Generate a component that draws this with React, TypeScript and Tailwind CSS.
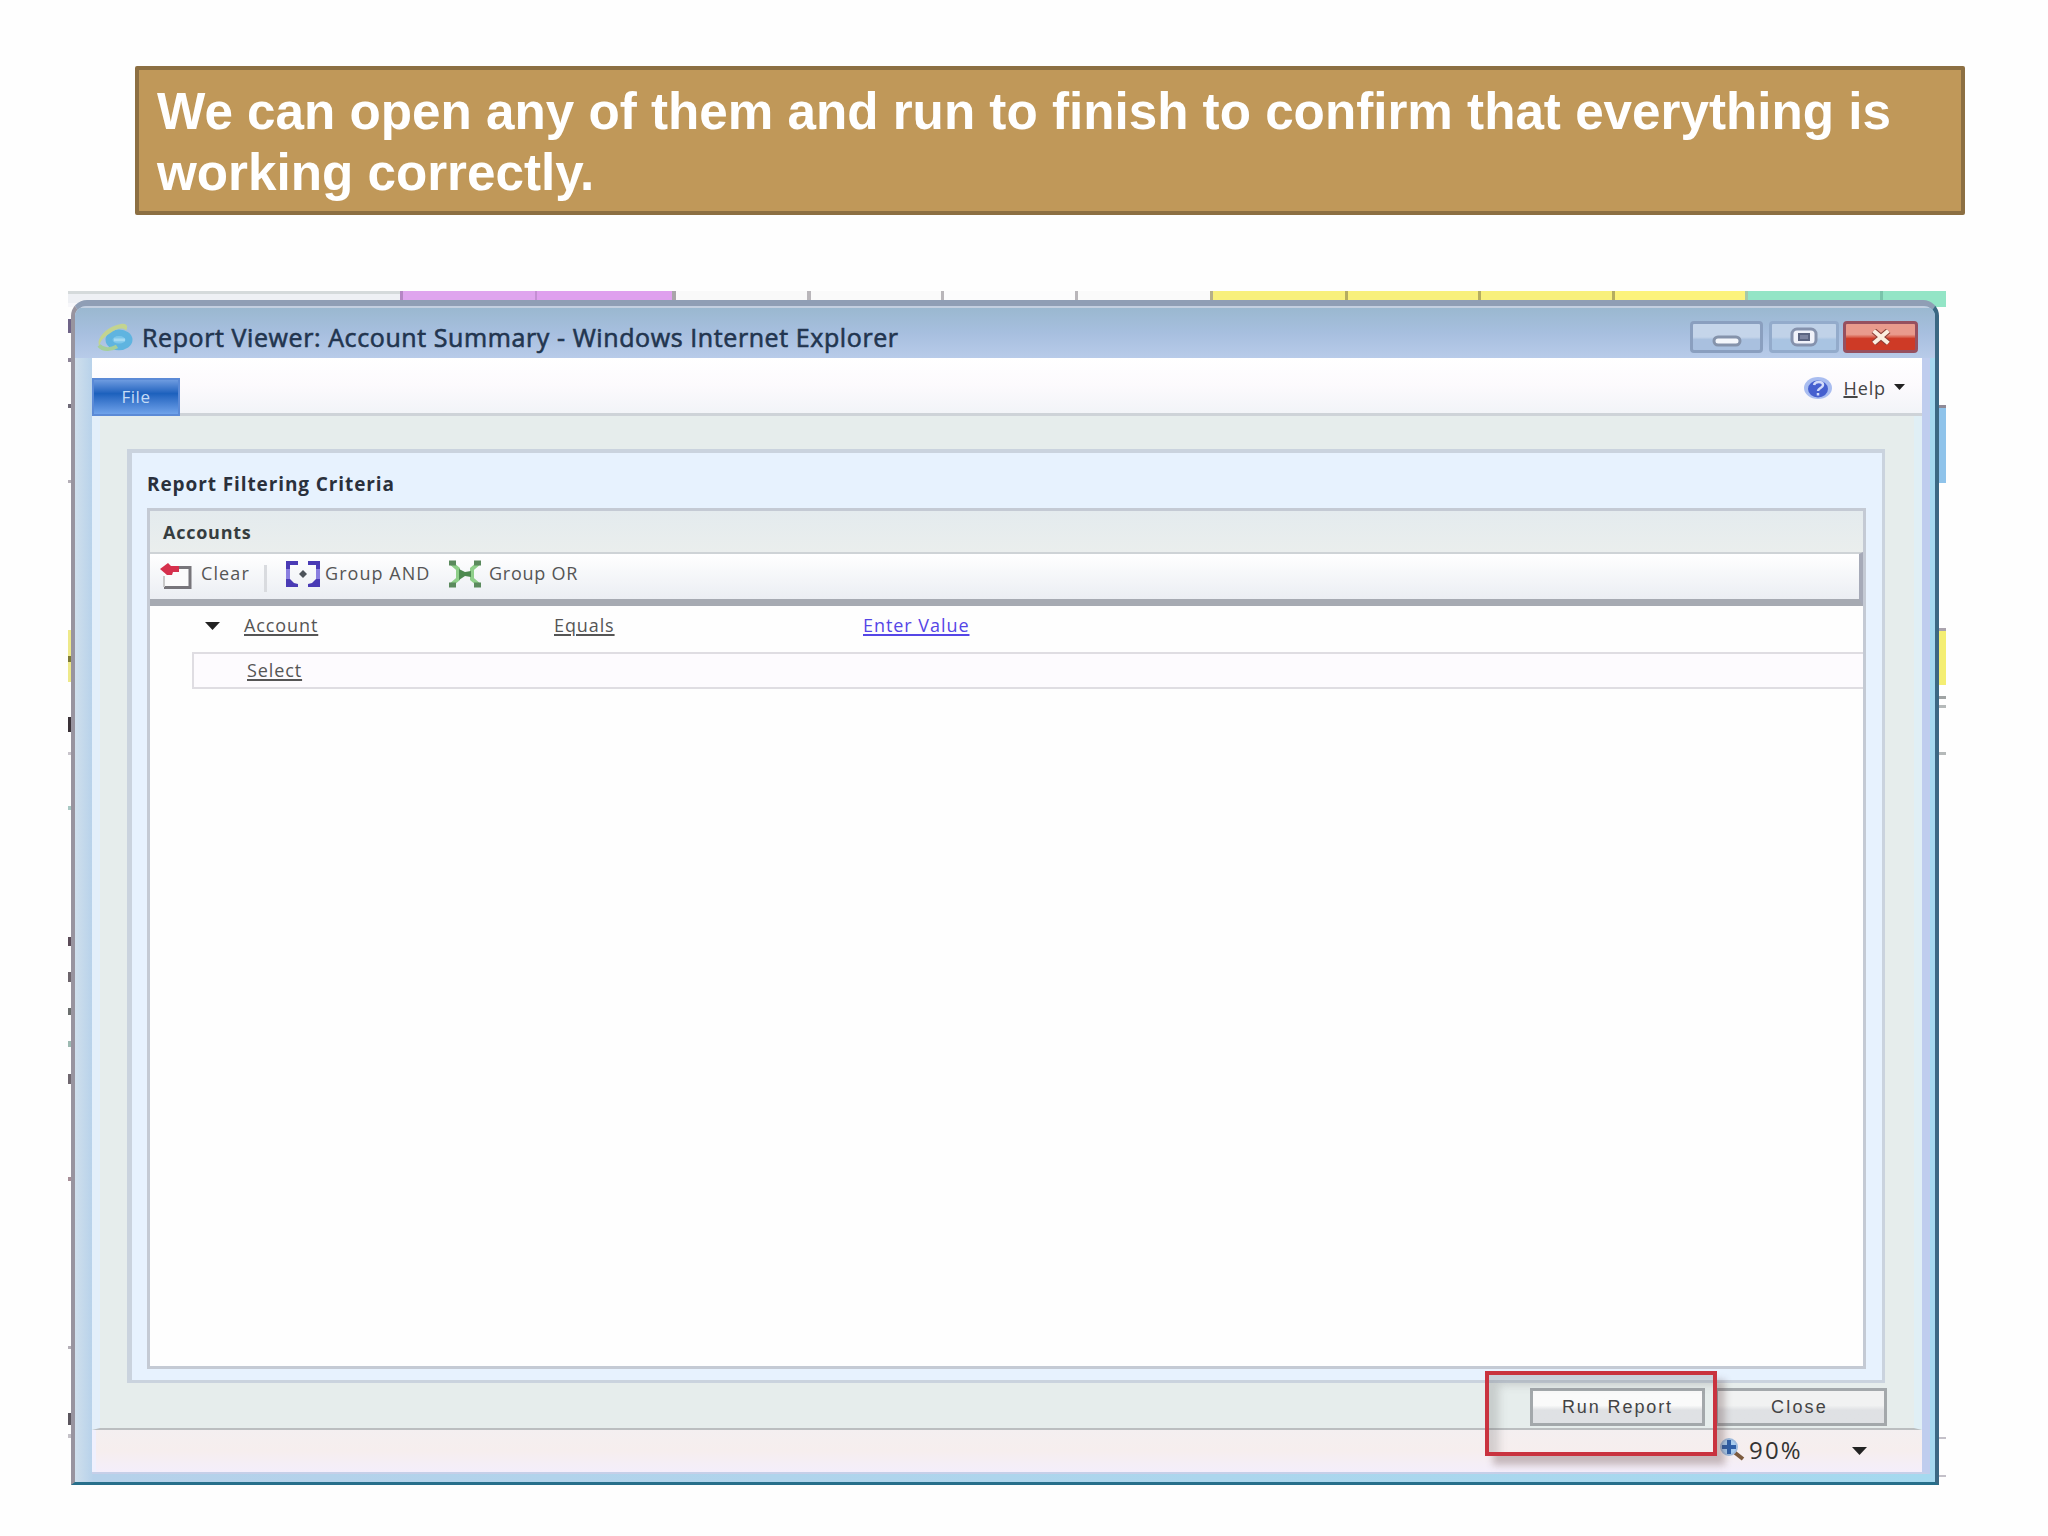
import React from 'react';

interface Mark {
  top: number;
  height: number;
  color: string;
}

// Pieces of the spreadsheet that stick out behind the window
const topCells = [
  'w-[332px] bg-[#eef0f4] border-t-3 border-t-[#d5dadb] border-b-4 border-b-[#f7f7fa]',
  'w-[135px] bg-[#dfa5ee] border-l-3 border-[#b586c4]',
  'w-[137px] bg-[#dfa0ee] border-l-2 border-[#c48fd3]',
  'w-[135px] bg-[#f9f9f9] border-l-4 border-[#a9a5a9]',
  'w-[134px] bg-[#fafafa] border-l-4 border-[#b9b6ba]',
  'w-[134px] bg-[#fcfcfd] border-l-3 border-[#b9b6ba]',
  'w-[135px] bg-[#fafafa] border-l-3 border-[#b9b6ba]',
  'w-[135px] bg-[#f8f07c] border-l-3 border-[#b5b08a]',
  'w-[133px] bg-[#f8f07c] border-l-3 border-[#b5ad60]',
  'w-[134px] bg-[#f8f07c] border-l-3 border-[#b5ad60]',
  'w-[133px] bg-[#fcf37c] border-l-3 border-[#b5ad60]',
  'w-[135px] bg-[#93e5c6] border-l-3 border-[#a5c9a8]',
  'w-[66px] bg-[#93e5c6] border-l-3 border-[#79c4ab]',
];

const leftMarks: Mark[] = [
  { top: 28, height: 14, color: '#6f6488' },
  { top: 67, height: 4, color: '#8d8598' },
  { top: 113, height: 4, color: '#6f6a78' },
  { top: 189, height: 3, color: '#b5b0b8' },
  { top: 339, height: 52, color: '#eee98a' },
  { top: 365, height: 6, color: '#7d7a35' },
  { top: 426, height: 15, color: '#3a3238' },
  { top: 461, height: 3, color: '#c9c5cc' },
  { top: 515, height: 4, color: '#a9c9c4' },
  { top: 646, height: 9, color: '#5b4c58' },
  { top: 681, height: 10, color: '#6d656c' },
  { top: 717, height: 7, color: '#6b6f6e' },
  { top: 750, height: 6, color: '#9dbab2' },
  { top: 783, height: 10, color: '#6f676f' },
  { top: 886, height: 4, color: '#a78f98' },
  { top: 1055, height: 3, color: '#b5b0b8' },
  { top: 1122, height: 12, color: '#5b565e' },
  { top: 1143, height: 4, color: '#c5c2c8' },
];

const rightMarks: Mark[] = [
  { top: 114, height: 3, color: '#8f8a96' },
  { top: 117, height: 75, color: '#8fc3ea' },
  { top: 337, height: 3, color: '#aaa3ad' },
  { top: 340, height: 54, color: '#f4ee73' },
  { top: 405, height: 3, color: '#9fa3a3' },
  { top: 414, height: 3, color: '#b5b9b9' },
  { top: 461, height: 3, color: '#b5b9b9' },
  { top: 1146, height: 2, color: '#c3c0c8' },
  { top: 1184, height: 2, color: '#c3c0c8' },
];

const IeIcon = () => (
  <svg className="w-[42px] h-[32px]" viewBox="0 0 42 34" preserveAspectRatio="none">
    <ellipse cx="24" cy="20" rx="10" ry="7.500" fill="#7cc6ea" stroke="#5fb4e0" strokeWidth="7" />
    <path d="M19 20h11" stroke="#a5daf2" strokeWidth="3" />
    <path d="M5 28C-1 19 13 5 27 3c6 0 6 4 4 7-3-4-10-2-16 3C8 18 4 22 5 28z" fill="#c3d490" />
    <path d="M4 26c4 5 12 5 18 1" stroke="#a5cf9b" strokeWidth="4" fill="none" />
  </svg>
);

const ClearIcon = () => (
  <svg className="w-[34px] h-[28px]" viewBox="0 0 34 28">
    <rect x="4" y="5" width="26" height="20" fill="#fbfbfb" />
    <path d="M18 5.500H30V25.500H4" fill="none" stroke="#77757a" strokeWidth="3" />
    <path d="M4 14V25" stroke="#c9c9c9" strokeWidth="2" />
    <path d="M0 7l8-6 3 3h8v6h-6l-1 3H7z" fill="#d5304c" />
  </svg>
);

const GroupAndIcon = () => (
  <svg className="w-[36px] h-[28px]" viewBox="0 0 36 28">
    <path d="M3 3V25M33 3V25" stroke="#8a7fe0" strokeWidth="4" />
    <path d="M1 1h12v4H5v4H1zM35 1H23v4h8v4h4zM1 27h12v-3l-4-1-4-4H1zM35 27H23v-3l4-1 4-4h4z" fill="#4a3bb5" />
    <path d="M18 10l4 4-4 4-4-4z" fill="#4d535a" />
  </svg>
);

const GroupOrIcon = () => (
  <svg className="w-[34px] h-[28px]" viewBox="0 0 34 28">
    <path d="M3 3l7 6v10l-7 6M31 3l-7 6v10l7 6" fill="none" stroke="#8fcf8a" strokeWidth="4" />
    <path d="M1 3h7M1 25h7M26 3h7M26 25h7" stroke="#5b8a5d" strokeWidth="5" />
    <path d="M11 9l6 3 6-1v6l-6-1-6 4z" fill="#4d8a50" />
  </svg>
);

const HelpIcon = () => (
  <svg className="w-[30px] h-[24px]" viewBox="0 0 30 24">
    <ellipse cx="15" cy="12" rx="14" ry="11" fill="#a9bdf0" />
    <ellipse cx="15" cy="13" rx="10" ry="8.500" fill="#4660cf" />
    <path d="M11 9c1-4 9-4 9 0 0 3-5 3-5 6M15 17v2.500" fill="none" stroke="#d3dcfa" strokeWidth="2.500" />
  </svg>
);

const ZoomIcon = () => (
  <svg className="w-[28px] h-[26px]" viewBox="0 0 28 26">
    <path d="M16 15l9 7" stroke="#7c5a3d" strokeWidth="4" />
    <circle cx="11" cy="10" r="8" fill="#a9cdef" stroke="#9fbbdd" strokeWidth="2" />
    <path d="M11 3v14M4 10h14" stroke="#2f5fa8" strokeWidth="4" />
  </svg>
);

const Arrow = ({ className }: { className: string }) => (
  <svg className={className} viewBox="0 0 16 9" preserveAspectRatio="none">
    <path d="M0 0h16L8 9z" fill="#222" />
  </svg>
);

const TitleBar = () => (
  <div className="h-[52px] shrink-0 flex items-start border-t-2 border-[#c3cfe0] bg-linear-to-b from-[#9ab8d0] via-[#a7bfdf] to-[#b8cbe9]">
    <div className="pl-[20px] pt-[13px]"><IeIcon /></div>
    <span className="ml-[5px] mt-[10px] leading-[38px] text-[25px] tracking-[0.590px] text-[#22354f] whitespace-nowrap [-webkit-text-stroke:0.600px_#22354f]">
      Report Viewer: Account Summary - Windows Internet Explorer
    </span>
    <div className="ml-auto mr-[17px] mt-[13px] flex h-[32px]">
      <div className="w-[73px] mr-[6px] border-3 border-[#8a9fbf] rounded-sm bg-linear-to-b from-[#c5d5ea] from-50% to-[#a9c0df] to-60% flex items-center justify-center">
        <svg className="w-[30px] h-[12px] mt-[8px]" viewBox="0 0 30 12">
          <rect x="2" y="2" width="26" height="8" rx="4" fill="#f4f7fc" stroke="#8593ab" strokeWidth="3" />
        </svg>
      </div>
      <div className="w-[70px] mr-[4px] border-3 border-[#93abcb] rounded-sm bg-linear-to-b from-[#c0d2e8] from-50% to-[#a9c4e2] to-60% flex items-center justify-center">
        <svg className="w-[30px] h-[20px]" viewBox="0 0 30 20">
          <rect x="3" y="2" width="24" height="16" rx="5" fill="#f0f2fa" stroke="#8592ad" strokeWidth="3" />
          <rect x="10" y="7" width="10" height="6" fill="#7d84a0" stroke="#5b6480" strokeWidth="2" />
        </svg>
      </div>
      <div className="w-[75px] border-3 border-[#96505f] rounded-sm bg-linear-to-b from-[#e99a8c] from-40% to-[#ce3a26] to-56% flex items-center justify-center">
        <svg className="w-[22px] h-[16px]" viewBox="0 0 24 18" preserveAspectRatio="none">
          <path d="M4 2l16 14M20 2L4 16" stroke="#8e4038" strokeWidth="7" />
          <path d="M4 2l16 14M20 2L4 16" stroke="#fbeee0" strokeWidth="4.500" />
        </svg>
      </div>
    </div>
  </div>
);

const Ribbon = () => (
  <div className="h-[58px] shrink-0 flex items-start border-b-3 border-[#ced3d8] bg-linear-to-b from-white via-[#fcfafd] to-[#f2f4f8]">
    <div className="mt-[20px] w-[88px] h-[38px] relative z-10 border-2 border-[#5b8ad6] bg-linear-to-b from-[#6d9be0] via-[#1c61bd] via-40% to-[#6fa2ea] text-center text-[17px] leading-[33px] text-[#c5dcf6] tracking-[0.500px]">
      File
    </div>
    <div className="ml-auto mr-[17px] mt-[17px] flex items-center h-[26px]">
      <HelpIcon />
      <span className="ml-[10px] text-[18px] tracking-[0.900px] leading-[26px] text-[#444]"><span className="underline decoration-2">H</span>elp</span>
      <Arrow className="ml-[8px] w-[11px] h-[6px] mb-[3px]" />
    </div>
  </div>
);

const Toolbar = () => (
  <div className="h-[54px] shrink-0 flex items-start pl-[10px] border-t-2 border-b-7 border-b-[#a6aab2] border-t-[#ced3d6] border-r-4 border-r-[#a6aab8] bg-linear-to-b from-white to-[#ebeef3] text-[18px] leading-[30px] text-[#555]">
    <div className="mt-[8px]"><ClearIcon /></div>
    <span className="ml-[7px] mt-[4px] w-[63px] tracking-[1.100px]">Clear</span>
    <div className="mt-[11px] w-[3px] h-[27px] bg-[#d9dbdf]" />
    <div className="ml-[18px] mt-[6px]"><GroupAndIcon /></div>
    <span className="ml-[4px] mt-[4px] w-[123px] tracking-[1.050px] whitespace-nowrap">Group AND</span>
    <div className="mt-[6px]"><GroupOrIcon /></div>
    <span className="ml-[7px] mt-[4px] tracking-[0.750px] whitespace-nowrap">Group OR</span>
  </div>
);

const FilterGrid = () => (
  <div className="flex-1 bg-[#fefefe] text-[18px] leading-[26px] text-[#555]">
    <div className="h-[46px] flex items-start pt-[6px] pl-[55px]">
      <Arrow className="mt-[10px] w-[15px] h-[8px]" />
      <div className="ml-[24px] w-[310px]"><span className="underline underline-offset-2 decoration-2 tracking-[0.900px]">Account</span></div>
      <div className="w-[309px]"><span className="underline underline-offset-2 decoration-2 tracking-[0.900px]">Equals</span></div>
      <span className="underline underline-offset-2 decoration-2 tracking-[0.950px] text-[#5546e6]">Enter Value</span>
    </div>
    <div className="ml-[42px] h-[37px] border-2 border-r-0 border-[#dfdde2] bg-[#fdfbfe] pl-[53px] pt-[3px]">
      <span className="underline underline-offset-2 decoration-2 tracking-[0.900px]">Select</span>
    </div>
  </div>
);

const App: React.FC = () => {
  return (
    <div className="w-[2048px] h-[1536px] bg-[#fefefe] overflow-hidden flex flex-col items-start font-['Open_Sans','Noto_Sans',sans-serif]">
      <div className="mt-[66px] ml-[135px] w-[1830px] h-[149px] shrink-0 border-4 border-[#8c6f42] rounded-xs bg-[#c09859] pl-[18px] pt-[11px] font-['Liberation_Sans',Arial,sans-serif] font-bold text-[51.200px] leading-[61px] text-white">
        <p className="whitespace-nowrap">We can open any of them and run to finish to confirm that everything is</p>
        <p>working correctly.</p>
      </div>

      <div className="relative mt-[76px] ml-[68px] w-[1878px] h-[1194px] shrink-0 overflow-hidden">
        <div className="flex h-[16px]">
          {topCells.map((cell, i) => (
            <div key={i} className={`shrink-0 ${cell}`} />
          ))}
        </div>
        {leftMarks.map(m => (
          <div key={m.top} className="absolute left-0 w-[6px]" style={{ top: m.top, height: m.height, backgroundColor: m.color }} />
        ))}
        {rightMarks.map(m => (
          <div key={m.top} className="absolute right-0 w-[8px]" style={{ top: m.top, height: m.height, backgroundColor: m.color }} />
        ))}

        {/* Browser window */}
        <div className="relative -mt-[7px] ml-[3px] w-[1868px] h-[1185px] flex flex-col rounded-t-2xl overflow-hidden bg-linear-to-r from-[#cfdfec] from-0% via-[#b6d1ea] via-1% to-[#a5d9ef] border-t-6 border-l-4 border-r-4 border-b-3 border-t-[#8f9eb5] border-l-[#98949f] border-r-[#3b6883] border-b-[#276f8b]">
          <TitleBar />
          <div className="flex-1 flex flex-col ml-[17px] mr-[5px] mb-[8px] border-r-8 border-r-[#bfcdee] border-b-2 border-b-[#c6cfe8]">
            <Ribbon />
            <div className="flex-1 bg-[#e6edec] border-x-8 border-l-[#e3effa] border-r-[#e0eff5] border-b-2 border-b-[#bbbec0] pl-[27px] pt-[33px]">
              <div className="w-[1758px] h-[934px] border-t-4 border-l-5 border-r-3 border-b-3 border-[#cad3de] bg-[#e7f2fe] flex flex-col pl-[15px] pr-[16px] pb-[11px]">
                <h2 className="h-[55px] pt-[12px] leading-[38px] text-[19px] font-bold tracking-[0.900px] text-[#2a303c]">Report Filtering Criteria</h2>
                <div className="flex-1 flex flex-col border-3 border-[#c4cad4]">
                  <div className="h-[41px] shrink-0 pl-[13px] leading-[43px] text-[18px] font-bold tracking-[0.750px] text-[#363d3f] bg-linear-to-b from-[#e4ebee] to-[#eaeeed]">Accounts</div>
                  <Toolbar />
                  <FilterGrid />
                </div>
              </div>
              <div className="flex h-[38px] mt-[5px] ml-[1403px] text-[18px] leading-[33px] text-[#444] font-['Liberation_Sans',Arial,sans-serif]">
                <button className="w-[175px] border-3 border-[#a3a8ab] bg-linear-to-b from-[#fafafa] from-45% to-[#dfe1e4] to-60% tracking-[1.900px]">Run Report</button>
                <button className="ml-[10px] w-[172px] border-3 border-[#a3a8ab] bg-linear-to-b from-[#f1f2f2] from-45% to-[#dfe1e4] to-60% tracking-[2.200px] pr-[3px]">Close</button>
              </div>
            </div>
            <div className="h-[42px] shrink-0 bg-linear-to-b from-[#f4eff0] via-[#f6eeee] to-[#f4eefb] border-l-4 border-[#f0f0fd] flex items-start">
              <div className="ml-[1622px] mt-[7px]"><ZoomIcon /></div>
              <span className="ml-[3px] mt-[4px] w-[103px] text-[24px] tracking-[2.200px] leading-[32px] text-[#333]">90%</span>
              <Arrow className="mt-[17px] w-[15px] h-[8px]" />
            </div>
          </div>
        </div>

        {/* Highlight around Run Report */}
        <div className="absolute left-[1417px] top-[1080px] w-[232px] h-[85px] border-4 border-[#c9333f] shadow-[8px_9px_7px_rgba(90,60,60,0.3),inset_10px_10px_8px_rgba(90,90,90,0.22)]" />
      </div>
    </div>
  );
};

export default App;
